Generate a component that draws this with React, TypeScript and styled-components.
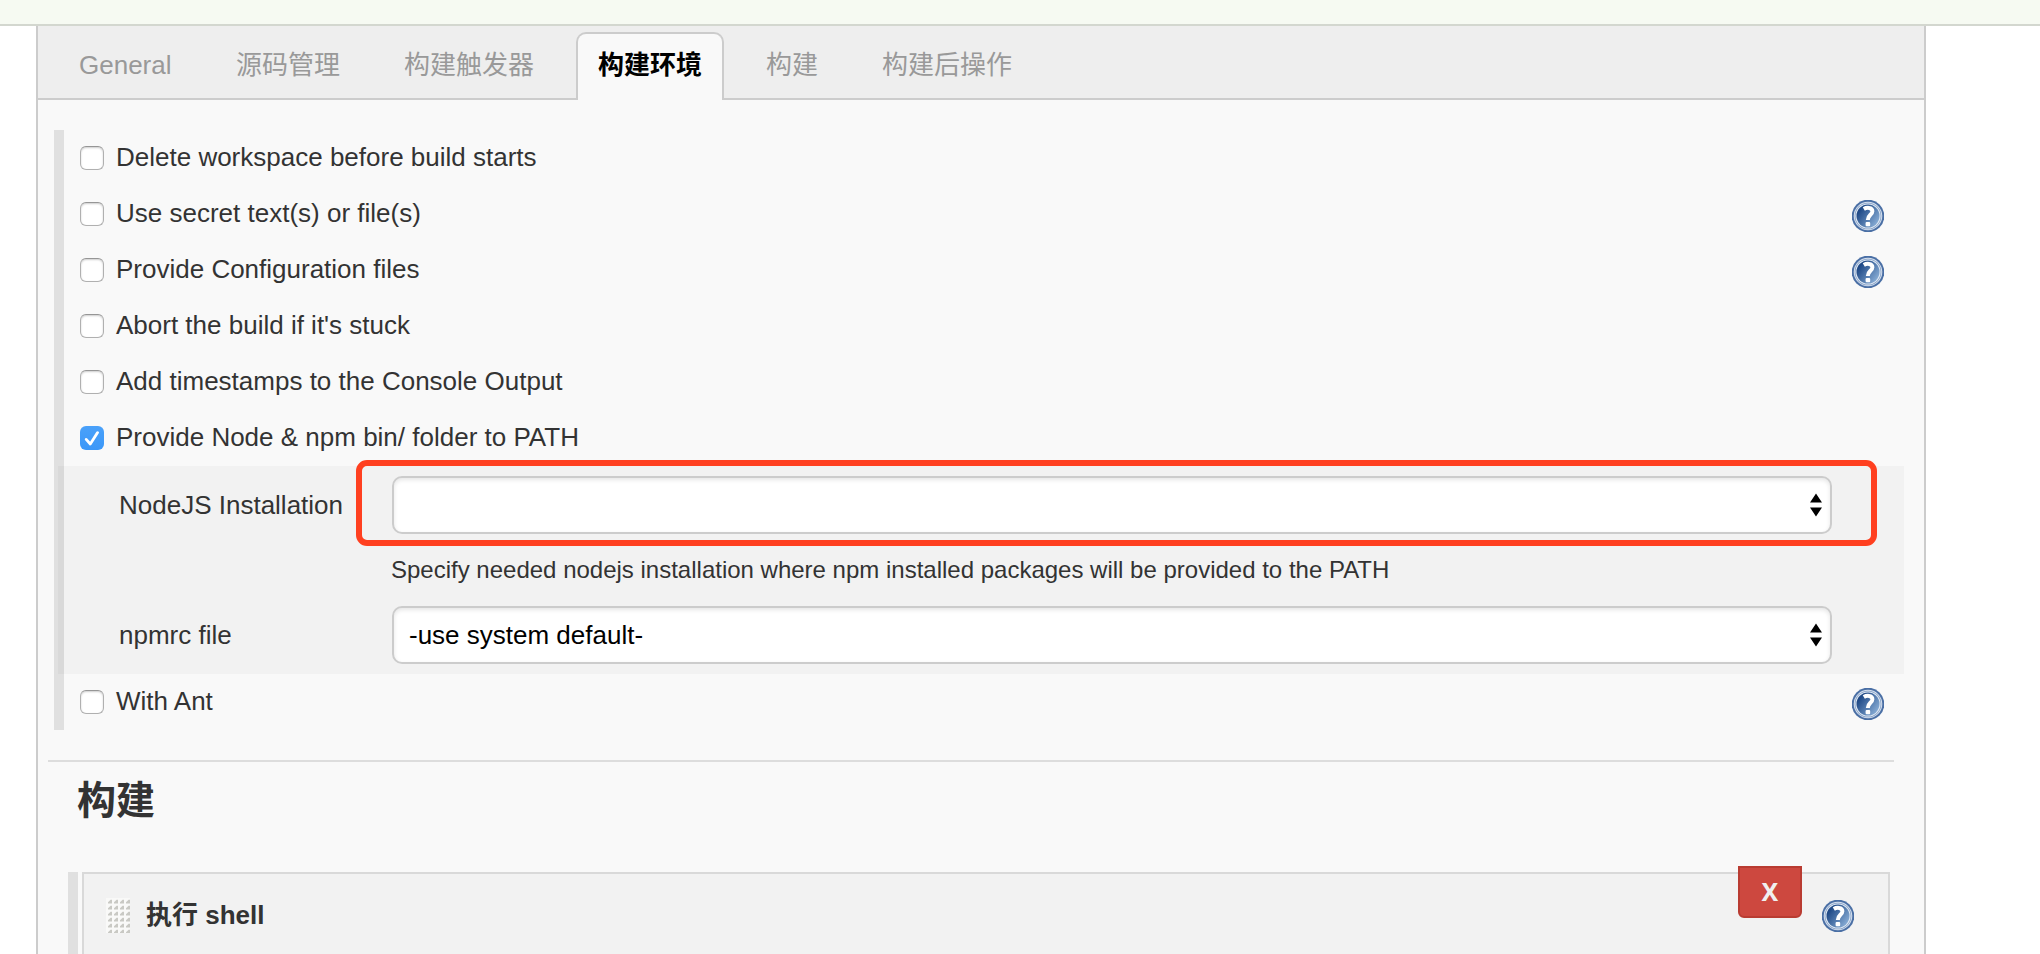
import React from 'react';
import styled, { createGlobalStyle, css } from 'styled-components';

const GlobalStyle = createGlobalStyle`
  *, *::before, *::after { box-sizing: border-box; }
  body {
    margin: 0;
    background: #fff;
    color: #333;
    font-family: "Liberation Sans", "Noto Sans CJK SC", sans-serif;
    font-size: 26px;
    line-height: 30px;
    overflow: hidden;
  }
`;

const Page = styled.div`
  display: flex;
  flex-direction: column;
  height: 954px;
  overflow: hidden;
`;

const Breadcrumbs = styled.header`
  flex: none;
  height: 26px;
  background: #f6faf2;
  border-bottom: 2px solid #d3d7cf;
`;

const ConfigPanel = styled.main`
  flex: 1;
  display: flex;
  flex-direction: column;
  min-height: 0;
  margin: 0 114px 0 36px;
  background: #f9f9f9;
  border: solid #ccc;
  border-width: 0 2px;
`;

const TabBar = styled.nav`
  flex: none;
  display: flex;
  align-items: flex-end;
  gap: 20px;
  height: 74px;
  padding-left: 18px;
  background: #eee;
  box-shadow: inset 0 -2px #ccc;
`;

const Tab = styled.button<{ $active?: boolean; $first?: boolean }>`
  flex: none;
  width: ${p => (p.$first ? '138px' : 'auto')};
  height: 68px;
  padding: 0 20px 4px ${p => (p.$first ? '21px' : '20px')};
  border: 2px solid transparent;
  border-bottom: 0;
  border-radius: 10px 10px 0 0;
  background: none;
  color: #999;
  font: inherit;
  text-align: left;
  white-space: nowrap;
  ${p =>
    p.$active &&
    css`
      background: #f9f9f9;
      border-color: #ccc;
      color: #000;
      font-weight: 700;
    `}
`;

const Section = styled.section`
  flex: none;
  margin: 30px 20px 0 16px;
  border-left: 10px solid #e0e0e0;
`;

const OptionRow = styled.div`
  display: flex;
  align-items: flex-start;
  height: 56px;
  padding: 14px 20px 0 16px;
`;

const Checkbox = styled.span<{ $checked?: boolean }>`
  flex: none;
  display: flex;
  width: 24px;
  height: 24px;
  margin: 2px 12px 0 0;
  border: 1px solid #b0b0b0;
  border-top-color: #969696;
  border-radius: 6px;
  background: #fff;
  box-shadow: inset 0 1px 2px rgba(0, 0, 0, 0.2);
  ${p =>
    p.$checked &&
    css`
      border: 0;
      background: linear-gradient(#4aa1fa, #3b97f8);
      box-shadow: none;
    `}
`;

const OptionLabel = styled.label`
  flex: 1;
  line-height: 26px;
  white-space: nowrap;
`;

const HelpButton = styled.span`
  flex: none;
  display: block;
  width: 32px;
  height: 32px;
`;

const NestedForm = styled.div`
  display: grid;
  grid-template-columns: 273px 1440px;
  grid-template-rows: 58px 72px 58px;
  align-items: center;
  height: 208px;
  margin-left: -6px;
  padding: 10px 0 10px 61px;
  background: rgba(0, 0, 0, 0.027);
  white-space: nowrap;
`;

const SelectBox = styled.div`
  display: flex;
  align-items: center;
  justify-content: space-between;
  height: 58px;
  padding: 0 8px 0 15px;
  border: 2px solid #ccc;
  border-radius: 10px;
  background: #fff;
  box-shadow: inset 0 2px 4px rgba(0, 0, 0, 0.1);
  color: #000;
`;

const FieldCell = styled.div`
  position: relative;
`;

const Highlight = styled.div`
  position: absolute;
  inset: -16px -45px -12px -36px;
  border: 6px solid #ff4020;
  border-radius: 11px;
`;

const Description = styled.p`
  grid-column: 2;
  margin: 0 0 0 -1px;
  font-size: 24px;
`;

const Divider = styled.hr`
  flex: none;
  width: 1846px;
  height: 2px;
  margin: 30px 0 0 10px;
  border: 0;
  background: #ddd;
`;

const SectionTitle = styled.h2`
  flex: none;
  height: 101px;
  margin: 9px 0 0 39px;
  font-size: 39px;
  line-height: 60px;
  font-weight: 700;
`;

const BuilderList = styled.section`
  flex: 1;
  display: flex;
  margin: 0 34px 0 30px;
  padding-left: 4px;
  border-left: 10px solid #e0e0e0;
`;

const BuilderCard = styled.div`
  flex: 1;
  display: flex;
  align-items: flex-start;
  border: 2px solid #d9d9d9;
  border-bottom: 0;
  background: #f2f2f2;
  padding: 24px 34px 0 22px;
`;

const DragHandle = styled.svg`
  flex: none;
  width: 24px;
  height: 35px;
  margin-right: 16px;
`;

const BuilderTitle = styled.b`
  flex: 1;
  line-height: 34px;
`;

const DeleteButton = styled.button`
  width: 64px;
  height: 52px;
  margin: -32px 20px 0 0;
  padding: 0;
  border: 2px solid #b93c32;
  border-radius: 0 0 6px 6px;
  background: #cd483f;
  color: #f0f0f0;
  font: 700 25px/46px "Noto Sans", "Open Sans", sans-serif;
  display: flex;
  justify-content: center;
`;

const CardHelp = styled.div`
  padding-top: 2px;
`;

const HelpIcon = () => (
  <HelpButton>
    <svg width="32" height="32" viewBox="0 0 32 32">
      <defs>
        <linearGradient id="helpFill" x1="0.05" y1="0.2" x2="0.95" y2="0.85">
          <stop offset="0.1" stopColor="#204a87" />
          <stop offset="0.95" stopColor="#86abd4" />
        </linearGradient>
      </defs>
      <circle cx="16" cy="16" r="16.3" fill="#4a6fa5" />
      <circle cx="16" cy="16" r="14.3" fill="#d6e0ee" />
      <circle cx="16" cy="16" r="13.3" fill="#7f9cc4" />
      <circle cx="16" cy="16" r="12.6" fill="#dfe8f3" />
      <circle cx="16" cy="16" r="11.5" fill="url(#helpFill)" />
      <path
        d="M11.8 9C14.2 7.500 20.4 6.800 20.4 11.3C20.4 14.8 15.8 15 15.800 20"
        fill="none"
        stroke="#fff"
        strokeWidth="4"
      />
      <rect x="13.600" y="22" width="4.600" height="4.200" rx="1" fill="#fff" />
    </svg>
  </HelpButton>
);

const SelectArrows = () => (
  <svg width="12" height="24" viewBox="0 0 12 24">
    <path d="M6 0.5L12 9.5H0ZM0 14.5H12L6 23.5Z" fill="#000" />
  </svg>
);

const Grip = () => {
  const dots: React.ReactNode[] = [];
  for (let row = 0; row < 6; row++) {
    for (let col = 0; col < 4; col++) {
      dots.push(
        <path
          key={`${row}-${col}`}
          d={`M${2 + col * 6} ${5.6 + row * 6}v-1.400l2.600 -2.400h1.400v3.800z`}
          fill="#c9c9c4"
        />
      );
    }
  }
  return (
    <DragHandle viewBox="0 0 24 35">
      <rect width="24" height="35" fill="#f9f9f8" />
      {dots}
    </DragHandle>
  );
};

interface OptionProps {
  label: string;
  checked?: boolean;
  help?: boolean;
}

const Option = ({ label, checked, help }: OptionProps) => (
  <OptionRow>
    <Checkbox $checked={checked}>
      {checked && (
        <svg width="24" height="24" viewBox="0 0 24 24">
          <path
            d="M6.2 13.400L10.300 18L17.600 6.600"
            fill="none"
            stroke="#fff"
            strokeWidth="2.8"
            strokeLinecap="round"
            strokeLinejoin="round"
          />
        </svg>
      )}
    </Checkbox>
    <OptionLabel>{label}</OptionLabel>
    {help && <HelpIcon />}
  </OptionRow>
);

export default function App() {
  return (
    <Page>
      <GlobalStyle />
      <Breadcrumbs />
      <ConfigPanel>
        <TabBar>
          <Tab $first>General</Tab>
          <Tab>源码管理</Tab>
          <Tab>构建触发器</Tab>
          <Tab $active>构建环境</Tab>
          <Tab>构建</Tab>
          <Tab>构建后操作</Tab>
        </TabBar>
        <Section>
          <Option label="Delete workspace before build starts" />
          <Option label="Use secret text(s) or file(s)" help />
          <Option label="Provide Configuration files" help />
          <Option label="Abort the build if it's stuck" />
          <Option label="Add timestamps to the Console Output" />
          <Option label="Provide Node & npm bin/ folder to PATH" checked />
          <NestedForm>
            <span>NodeJS Installation</span>
            <FieldCell>
              <SelectBox>
                <span />
                <SelectArrows />
              </SelectBox>
              <Highlight />
            </FieldCell>
            <Description>
              Specify needed nodejs installation where npm installed packages will be provided to the PATH
            </Description>
            <span>npmrc file</span>
            <SelectBox>
              <span>-use system default-</span>
              <SelectArrows />
            </SelectBox>
          </NestedForm>
          <Option label="With Ant" help />
        </Section>
        <Divider />
        <SectionTitle>构建</SectionTitle>
        <BuilderList>
          <BuilderCard>
            <Grip />
            <BuilderTitle>执行 shell</BuilderTitle>
            <DeleteButton>X</DeleteButton>
            <CardHelp>
              <HelpIcon />
            </CardHelp>
          </BuilderCard>
        </BuilderList>
      </ConfigPanel>
    </Page>
  );
}
